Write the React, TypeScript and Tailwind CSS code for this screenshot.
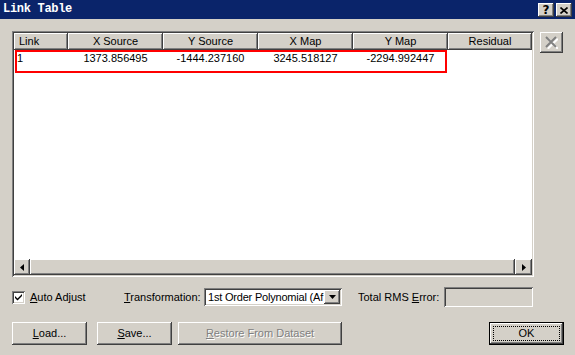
import React from 'react';

const columns = [
  { label: 'Link', width: 'w-[54px]', align: 'justify-start pl-[5px]' },
  { label: 'X Source', width: 'w-[95px]', align: 'justify-center' },
  { label: 'Y Source', width: 'w-[95px]', align: 'justify-center' },
  { label: 'X Map', width: 'w-[95px]', align: 'justify-center' },
  { label: 'Y Map', width: 'w-[95px]', align: 'justify-center' },
  { label: 'Residual', width: 'w-[84px]', align: 'justify-center' },
];

const rows = [['1', '1373.856495', '-1444.237160', '3245.518127', '-2294.992447', '']];

// classic 3d edges
const raised =
  'shadow-[inset_-1px_-1px_0_#404040,inset_1px_1px_0_#ffffff,inset_-2px_-2px_0_#808080,inset_2px_2px_0_#d4d0c8]';
const sunken =
  'shadow-[inset_1px_1px_0_#808080,inset_-1px_-1px_0_#ffffff,inset_2px_2px_0_#404040,inset_-2px_-2px_0_#d4d0c8]';

function Arrow({ dir }: { dir: 'left' | 'right' | 'down' }) {
  if (dir === 'down') {
    return (
      <svg width="7" height="4" viewBox="0 0 7 4">
        <path d="M0 0h7L3.5 4z" fill="#000" />
      </svg>
    );
  }
  return (
    <svg width="4" height="7" viewBox="0 0 4 7">
      {dir === 'left' ? <path d="M4 0v7L0 3.5z" fill="#000" /> : <path d="M0 0v7l4-3.5z" fill="#000" />}
    </svg>
  );
}

function Button({ children, w, disabled }: { children: React.ReactNode; w: string; disabled?: boolean }) {
  return (
    <div
      className={`${w} h-[23px] bg-[#d4d0c8] flex items-center justify-center ${raised} ${
        disabled ? 'text-[#808080] [text-shadow:1px_1px_0_#ffffff]' : 'text-black'
      }`}
    >
      {children}
    </div>
  );
}

export default function App() {
  return (
    <div className="w-[575px] h-[355px] bg-[#d4d0c8] overflow-hidden text-[11px] leading-[13px] font-['Liberation_Sans',Arial,sans-serif] text-black select-none">
      {/* title bar */}
      <div className="h-[19px] bg-[#0a246a] flex items-center justify-between pl-[3px] pr-[3px]">
        <span className="text-white font-bold text-[12px] font-['Liberation_Mono',monospace] tracking-[-0.3px]">
          Link Table
        </span>
        <div className="flex gap-[2px] mt-[1px]">
          <div className={`w-[16px] h-[14px] bg-[#d4d0c8] flex items-center justify-center ${raised}`}>
            <span className="font-bold text-[12px] leading-[12px] font-['DejaVu_Sans',sans-serif] mt-[-1px]">?</span>
          </div>
          <div className={`w-[16px] h-[14px] bg-[#d4d0c8] flex items-center justify-center ${raised}`}>
            <svg width="8" height="7" viewBox="0 0 8 7">
              <path d="M0.5 0.5l7 6M7.5 0.5l-7 6" stroke="#000" strokeWidth="1.6" />
            </svg>
          </div>
        </div>
      </div>

      <div className="pl-[12px] pt-[12px] flex flex-col">
        {/* list + delete */}
        <div className="flex items-start">
          <div className={`w-[522px] h-[246px] p-[2px] bg-white ${sunken}`}>
            <div className="w-full h-full flex flex-col">
              <div className="h-[17px] flex bg-[#d4d0c8]">
                {columns.map((c) => (
                  <div key={c.label} className={`${c.width} h-full flex items-center ${c.align} ${raised}`}>
                    {c.label}
                  </div>
                ))}
              </div>
              <div className="flex-1 relative bg-white">
                {rows.map((r, i) => (
                  <div key={i} className="h-[17px] flex">
                    {r.map((v, j) => (
                      <div key={j} className={`${columns[j].width} flex items-center ${j === 0 ? 'pl-[3px]' : 'justify-center'}`}>
                        {v}
                      </div>
                    ))}
                  </div>
                ))}
                <div className="absolute left-[1px] top-0 w-[432px] h-[23px] border-2 border-[#ff0000]" />
              </div>
              <div className="h-[16px] flex bg-[#d4d0c8]">
                <div className={`w-[16px] h-full flex items-center justify-center ${raised}`}>
                  <Arrow dir="left" />
                </div>
                <div className={`flex-1 h-full ${raised}`} />
                <div className={`w-[17px] h-full flex items-center justify-center ${raised}`}>
                  <Arrow dir="right" />
                </div>
              </div>
            </div>
          </div>
          <div className={`ml-[6px] mt-[1px] w-[23px] h-[21px] bg-[#d4d0c8] flex items-center justify-center ${raised}`}>
            <svg width="13" height="13" viewBox="0 0 13 13">
              <path d="M2 2l10 10M12 2L2 12" stroke="#ffffff" strokeWidth="2" transform="translate(0.8 0.8)" />
              <path d="M1 1l10 10M11 1L1 11" stroke="#808080" strokeWidth="2" />
            </svg>
          </div>
        </div>

        {/* options row */}
        <div className="mt-[10px] h-[20px] flex items-center">
          <div className="w-[112px] flex items-center">
            <div className={`w-[13px] h-[13px] bg-white flex items-center justify-center ${sunken}`}>
              <svg width="7" height="7" viewBox="0 0 7 7">
                <path d="M0 2l2.5 2.5L7 0v2L2.5 6.5 0 4z" fill="#000" />
              </svg>
            </div>
            <span className="ml-[5px]">
              <span className="underline">A</span>uto Adjust
            </span>
          </div>
          <span className="w-[80px]">
            <span className="underline">T</span>ransformation:
          </span>
          <div className={`w-[138px] h-[18px] bg-white flex items-center p-[2px] ${sunken}`}>
            <span className="flex-1 whitespace-nowrap pl-[2px] tracking-[-0.2px]">1st Order Polynomial (Af</span>
            <div className={`w-[16px] h-[14px] bg-[#d4d0c8] flex items-center justify-center ${raised}`}>
              <Arrow dir="down" />
            </div>
          </div>
          <span className="ml-[16px] w-[86px]">
            Total RMS <span className="underline">E</span>rror:
          </span>
          <div className={`w-[89px] h-[20px] bg-[#d4d0c8] ${sunken}`} />
        </div>

        {/* buttons row */}
        <div className="mt-[15px] flex items-center">
          <Button w="w-[75px]">
            <span>
              <span className="underline">L</span>oad...
            </span>
          </Button>
          <div className="ml-[10px]">
            <Button w="w-[75px]">
              <span>
                <span className="underline">S</span>ave...
              </span>
            </Button>
          </div>
          <div className="ml-[6px]">
            <Button w="w-[164px]" disabled>
              <span>
                <span className="underline">R</span>estore From Dataset
              </span>
            </Button>
          </div>
          <div className="ml-[147px] w-[75px] h-[23px] border border-black">
            <div className={`w-full h-full bg-[#d4d0c8] p-[3px] ${raised}`}>
              <div className="w-full h-full border border-dotted border-black flex items-center justify-center">
                OK
              </div>
            </div>
          </div>
        </div>
      </div>
    </div>
  );
}
